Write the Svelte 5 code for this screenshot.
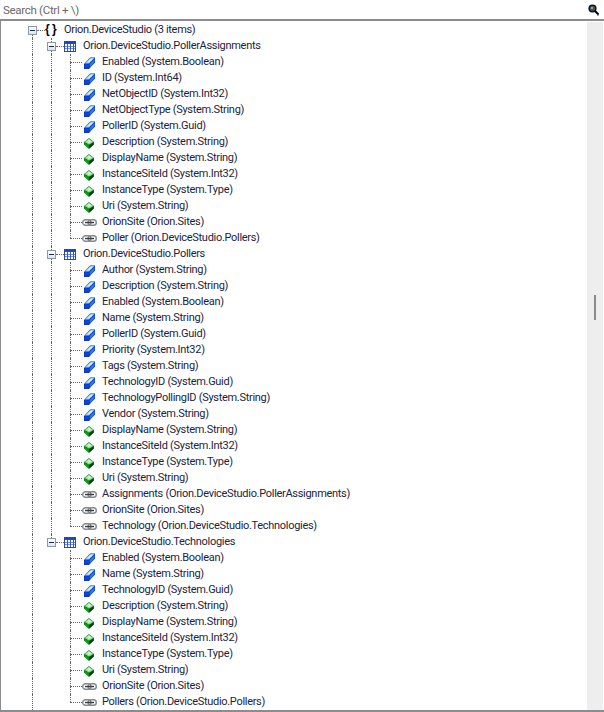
<script>
  const group = (name, keys, inherited, links) => ({ name, keys, inherited, links });
  const common = ['DisplayName (System.String)', 'InstanceSiteId (System.Int32)', 'InstanceType (System.Type)', 'Uri (System.String)'];
  const groups = [
    group('Orion.DeviceStudio.PollerAssignments',
      ['Enabled (System.Boolean)', 'ID (System.Int64)', 'NetObjectID (System.Int32)', 'NetObjectType (System.String)', 'PollerID (System.Guid)'],
      ['Description (System.String)', ...common],
      ['OrionSite (Orion.Sites)', 'Poller (Orion.DeviceStudio.Pollers)']),
    group('Orion.DeviceStudio.Pollers',
      ['Author (System.String)', 'Description (System.String)', 'Enabled (System.Boolean)', 'Name (System.String)', 'PollerID (System.Guid)', 'Priority (System.Int32)', 'Tags (System.String)', 'TechnologyID (System.Guid)', 'TechnologyPollingID (System.String)', 'Vendor (System.String)'],
      common,
      ['Assignments (Orion.DeviceStudio.PollerAssignments)', 'OrionSite (Orion.Sites)', 'Technology (Orion.DeviceStudio.Technologies)']),
    group('Orion.DeviceStudio.Technologies',
      ['Enabled (System.Boolean)', 'Name (System.String)', 'TechnologyID (System.Guid)'],
      ['Description (System.String)', ...common],
      ['OrionSite (Orion.Sites)', 'Pollers (Orion.DeviceStudio.Pollers)'])
  ];
  const leaves = (g) => [
    ...g.keys.map((text) => ({ text, kind: 'key' })),
    ...g.inherited.map((text) => ({ text, kind: 'prop' })),
    ...g.links.map((text) => ({ text, kind: 'link' }))
  ];
</script>

{#snippet expander()}
  <span class="expander"><span class="minus"></span></span>
{/snippet}

<div class="window">
  <div class="search">
    <span class="placeholder">Search (Ctrl + \)</span>
    <svg class="glass" width="12" height="12" viewBox="0 0 12 12">
      <circle cx="4.5" cy="4.5" r="3.4" fill="#39506a" stroke="#111" stroke-width="1.4"/>
      <path d="M3 3h2v2H3z" fill="#c9a23c"/>
      <path d="M7 7l3.5 3.5" stroke="#000" stroke-width="2"/>
      <path d="M9 11h2" stroke="#0a5bd0" stroke-width="1"/>
    </svg>
  </div>
  <div class="frame">
    <div class="tree">
      <div class="row">
        <span class="cell line-mid root-exp">{@render expander()}</span>
        <span class="braces">{'{ }'}</span>
        <span class="label">Orion.DeviceStudio (3 items)</span>
      </div>
      {#each groups as g, gi}
        <div class="row">
          <span class="cell line-full"></span>
          <span class="cell {gi === groups.length - 1 ? 'line-top' : 'line-full'} elbow-exp">{@render expander()}</span>
          <svg class="icon t" width="12" height="11" viewBox="0 0 12 11">
            <rect x="0.5" y="0.5" width="11" height="10" fill="#fff" stroke="#2a4a9c"/>
            <rect x="1" y="1" width="10" height="2" fill="#1f48c8"/>
            <path d="M1 5.5h10M1 7.5h10" stroke="#6f8fe0"/>
            <path d="M3.5 3v7M6.5 3v7M9.5 3v7" stroke="#3a5cc0"/>
          </svg>
          <span class="label">{g.name}</span>
        </div>
        {#each leaves(g) as leaf, li}
          <div class="row">
            <span class="cell line-full"></span>
            <span class="cell {gi === groups.length - 1 ? '' : 'line-full'}"></span>
            <span class="cell leaf {li === leaves(g).length - 1 ? 'line-top' : 'line-full'}"></span>
            {#if leaf.kind === 'key'}
              <svg class="icon k" width="11" height="12" viewBox="0 0 11 12">
                <path d="M0 7L6 .5h5v5L5 12H0z" fill="#0a2fb8"/>
                <path d="M.7 6.5L6.2 1h4.3L5 6.5z" fill="#9ccaf2"/>
                <path d="M3 5.5L6.6 2h2.2L5 5.5z" fill="#d8edfb"/>
                <path d="M5.6 7l4.9-5.2v3.5L5.6 10.7z" fill="#2a7ae0"/>
                <path d="M.7 7.2h4.2v4.1H.7z" fill="#0c47cf"/>
              </svg>
            {:else if leaf.kind === 'prop'}
              <svg class="icon p" width="10" height="11" viewBox="0 0 10 11">
                <path d="M5 0L10 4V6.5L5 11 0 6.5V4z" fill="#0a7d14"/>
                <path d="M5 .6L9.4 4 5 6.6.6 4z" fill="#9fd8a9"/>
                <path d="M5 1.6L7.4 3.8 5 5 3 3.8z" fill="#d6f0db"/>
                <path d="M5.2 7.2L9.5 4.8V6.4L5.2 10.6z" fill="#063a0a"/>
                <path d="M.5 4.8L4.8 7.2V10.6L.5 6.4z" fill="#0fa01c"/>
              </svg>
            {:else}
              <svg class="icon l" width="15" height="7" viewBox="0 0 15 7">
                <rect x="0.7" y="0.7" width="8.2" height="5.6" rx="2.8" fill="none" stroke="#85898f" stroke-width="1.4"/>
                <rect x="6.1" y="0.7" width="8.2" height="5.6" rx="2.8" fill="none" stroke="#85898f" stroke-width="1.4"/>
                <path d="M3 3.5h9" stroke="#3c4045" stroke-width="1.5"/>
              </svg>
            {/if}
            <span class="label">{leaf.text}</span>
          </div>
        {/each}
      {/each}
      <div class="row"><span class="cell line-full"></span></div>
    </div>
    <div class="scrollbar"><span class="thumb"></span></div>
  </div>
</div>

<style>
  :global(body) { margin: 0; background: #fff; }
  .window {
    width: 604px;
    height: 712px;
    display: flex;
    flex-direction: column;
    overflow: hidden;
    font-family: Roboto, "Liberation Sans", Arial, sans-serif;
    font-size: 11px;
    letter-spacing: -0.3px;
    color: #1c2340;
  }
  .search {
    height: 19px;
    flex: none;
    display: flex;
    align-items: center;
    justify-content: space-between;
    padding: 0 4px 0 3px;
    background: #fff;
  }
  .placeholder { color: #6a6a6a; font-size: 11.5px; }
  .frame {
    flex: 1;
    min-height: 0;
    display: flex;
    border-top: 2px solid #8b8c90;
    border-bottom: 2px solid #8b8c90;
    border-left: 1px solid #8b8c90;
    padding-top: 1px;
  }
  .tree {
    flex: 1;
    min-width: 0;
    padding-left: 21px;
    overflow: hidden;
  }
  .row {
    height: 16px;
    display: flex;
    align-items: center;
    white-space: nowrap;
  }
  .label { padding-bottom: 2px; }
  .cell {
    position: relative;
    flex: none;
    width: 19px;
    height: 16px;
  }
  .line-full::before,
  .line-top::before,
  .line-mid::before {
    content: "";
    position: absolute;
    left: 10px;
    top: 0;
    bottom: 0;
    border-left: 1px dotted #666;
  }
  .line-top::before { bottom: 8px; }
  .line-mid::before { top: 8px; }
  .leaf::after {
    content: "";
    position: absolute;
    left: 10px;
    top: 8px;
    width: 12px;
    border-top: 1px dotted #666;
  }
  .expander {
    position: absolute;
    left: 6px;
    top: 4px;
    width: 7px;
    height: 7px;
    border: 1px solid #8e99a8;
    background: linear-gradient(#fff, #dfe3ea);
    display: flex;
    align-items: center;
    justify-content: center;
    z-index: 1;
  }
  .minus { width: 5px; height: 1px; background: #1b2a4a; }
  .root-exp::after,
  .elbow-exp::after {
    content: "";
    position: absolute;
    left: 15px;
    top: 8px;
    width: 8px;
    border-top: 1px dotted #666;
  }
  .braces {
    flex: none;
    width: 23px;
    padding: 0 0 2px 4px;
    box-sizing: border-box;
    font-family: "Liberation Sans", Arial, sans-serif;
    font-weight: bold;
    letter-spacing: 0;
    word-spacing: -1px;
    color: #000;
    font-size: 12px;
    position: relative;
    z-index: 1;
    background: linear-gradient(#fff, #fff) no-repeat 4px 0 / 12px 100%;
  }
  .icon { flex: none; position: relative; z-index: 1; }
  .t { margin: 0 7px 0 4px; }
  .k { margin: 1px 7px 0 5px; }
  .p { margin: 2px 8px 0 5px; }
  .l { margin: 1px 5px 0 3px; }
  .scrollbar {
    flex: none;
    width: 16px;
    margin-right: 1px;
    background: #eeeeee;
    position: relative;
  }
  .thumb {
    position: absolute;
    left: 7px;
    top: 273px;
    width: 2px;
    height: 25px;
    background: #8a8a8a;
  }
</style>
